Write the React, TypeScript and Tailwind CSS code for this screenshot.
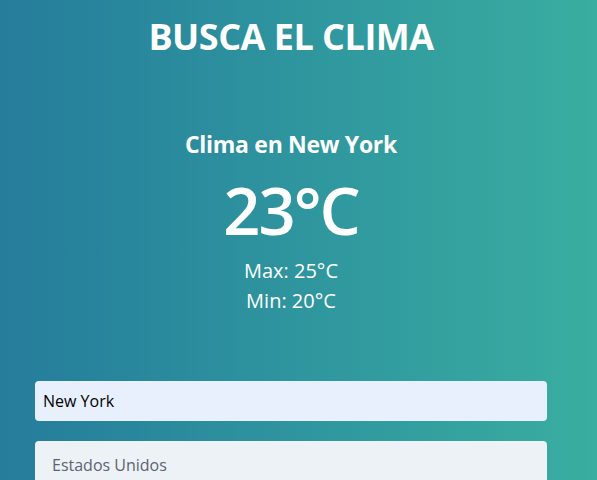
import React from "react";

export default function App() {
  return (
    <div
      className="w-full h-[480px] overflow-hidden bg-gradient-to-r from-[#257c9b] to-[#3aaea0] text-white"
      style={{ fontFamily: '"Open Sans", "Noto Sans", sans-serif' }}
    >
      <div className="w-[582px]">
        <h1 className="text-center font-bold text-[36px] leading-[44px] pt-[15px] tracking-[-0.5px]">
          BUSCA EL CLIMA
        </h1>
        <div className="mt-[70px] flex flex-col items-center">
          <h2 className="font-bold text-[23px] leading-[30px] tracking-[-0.3px]">Clima en New York</h2>
          <p className="text-[65px] leading-[76px] font-semibold tracking-[-2px] mt-[13px]">23°C</p>
          <p className="text-[20px] leading-[30px] mt-[8px]">Max: 25°C</p>
          <p className="text-[20px] leading-[30px]">Min: 20°C</p>
        </div>
        <div className="px-[35px] mt-[65px] flex flex-col gap-[20px]">
          <div className="h-[40px] rounded-[4px] bg-[#e8f0fe] flex items-center pl-[8px] text-[16px] text-black">
            New York
          </div>
          <div className="h-[48px] rounded-[4px] bg-[#edf2f6] flex items-center pl-[17px] text-[16px] text-[#5c6370]">
            Estados Unidos
          </div>
        </div>
      </div>
    </div>
  );
}
